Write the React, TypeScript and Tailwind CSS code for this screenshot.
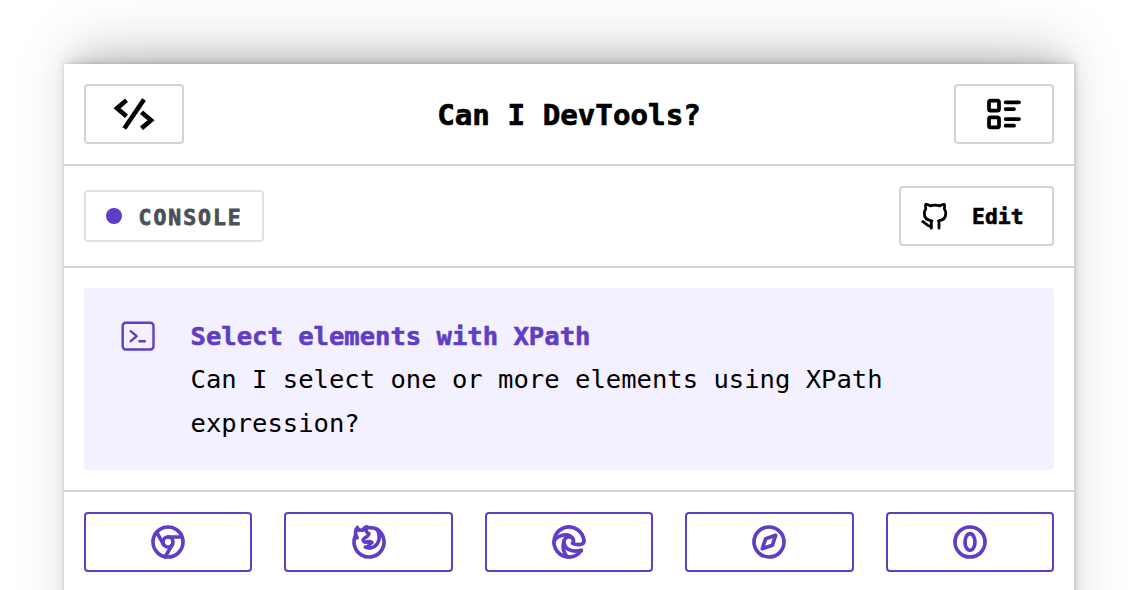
import { TbBrandChrome, TbBrandFirefox, TbBrandEdge, TbBrandSafari, TbBrandOpera, TbListDetails } from 'react-icons/tb';

const browsers = [
  { name: 'Chrome', Icon: TbBrandChrome },
  { name: 'Firefox', Icon: TbBrandFirefox },
  { name: 'Edge', Icon: TbBrandEdge },
  { name: 'Safari', Icon: TbBrandSafari },
  { name: 'Opera', Icon: TbBrandOpera },
];

function CodeIcon() {
  return (
    <svg width="42" height="32" viewBox="0 0 42 32" fill="none" stroke="currentColor" strokeWidth="4.6">
      <path d="M13.5 2.2L4 10.3L13.5 18.3" />
      <path d="M31 1.5L11.3 30.5" />
      <path d="M28.5 14.3L38 22.3L28.5 30.3" />
    </svg>
  );
}

function GithubIcon() {
  return (
    <svg className="mt-0.5" width="30" height="30" viewBox="0 0 30 30" fill="none" stroke="currentColor" strokeWidth="2.8" strokeLinecap="round" strokeLinejoin="round">
      <path d="M11.3 26.2V20.6c0-.8.2-1.3.6-1.8C7 18.4 4.3 15.8 4.3 11.3c0-1.9.5-3.3 1.5-4.5-.5-1.6-.5-3.1 0-4.5 0 0 2-.1 4.5 1.5 3.200-.8 6.300-.8 9.500 0 2.500-1.600 4.500-1.500 4.500-1.500.5 1.400.5 2.900 0 4.500 1 1.200 1.500 2.600 1.500 4.500 0 4.500-2.700 7.100-7.400 7.500.4.500.6 1 .6 1.800v5.600" />
      <path d="M11.3 24.3C7 24.7 6.3 21 2.7 19.6" />
    </svg>
  );
}

function TerminalIcon() {
  return (
    <svg className="mt-[7px] shrink-0" width="34" height="30" viewBox="0 0 34 30" fill="none" stroke="#5f3dc4" strokeWidth="2.4" strokeLinecap="round" strokeLinejoin="round">
      <rect x="1.7" y="1.7" width="30.8" height="26.8" rx="3.2" />
      <path d="M9.7 10.2L15.7 15.2L9.7 20.2M18.5 20.2H23.8" />
    </svg>
  );
}

export default function App() {
  return (
    <div className="h-[590px] w-[1140px] overflow-hidden bg-white px-16 pt-16 font-['DejaVu_Sans_Mono',monospace] text-black">
      <main className="-mr-px h-[800px] w-[1012px] border-r-2 border-[#ced4da] bg-white shadow-[0_-1px_3px_rgba(0,0,0,0.09),0_-4px_8px_-2px_rgba(0,0,0,0.07),0_-12px_20px_-6px_rgba(0,0,0,0.09),0_-22px_36px_-10px_rgba(0,0,0,0.08),0_-28px_64px_-12px_rgba(0,0,0,0.14)]">
        <header className="flex h-[102px] items-center justify-between border-b-2 border-[#ced4da] px-5">
          <button aria-label="Home" className="flex h-[60px] w-[100px] items-center justify-center rounded-[4px] border-2 border-[#ced4da]">
            <CodeIcon />
          </button>
          <h1 className="pt-1 text-[29.2px] font-bold leading-none [-webkit-text-stroke:0.7px_currentColor]">Can I DevTools?</h1>
          <button aria-label="Menu" className="flex h-[60px] w-[100px] items-center justify-center rounded-[4px] border-2 border-[#ced4da]">
            <TbListDetails size={40} className="[stroke-width:2.25]" />
          </button>
        </header>
        <div className="flex h-[102px] items-center justify-between border-b-2 border-[#ced4da] px-5">
          <div className="flex h-[52px] w-[180px] items-center rounded-[4px] border-2 border-[#dee2e6] pl-5">
            <span className="h-4 w-4 rounded-full bg-[#5f3dc4]" />
            <span className="ml-[16.500px] pt-[3px] text-[21.4px] font-bold leading-none tracking-[2px] text-[#495057] [-webkit-text-stroke:0.8px_currentColor]">CONSOLE</span>
          </div>
          <button className="flex h-[60px] w-[155px] items-center rounded-[4px] border-2 border-[#ced4da] pl-[19px]">
            <GithubIcon />
            <span className="ml-[22px] pt-0.5 text-[21.4px] font-bold leading-none [-webkit-text-stroke:0.6px_currentColor]">Edit</span>
          </button>
        </div>
        <section className="border-b-2 border-[#ced4da] p-5">
          <div className="flex h-[182px] rounded-[4px] bg-[#f3f0ff] pl-[37px] pt-[26px]">
            <TerminalIcon />
            <div className="ml-[35.5px] text-[25.55px] leading-[44px]">
              <h2 className="font-bold text-[#5f3dc4] [-webkit-text-stroke:0.6px_currentColor]">Select elements with XPath</h2>
              <p className="-mt-px w-[740px]">Can I select one or more elements using XPath expression?</p>
            </div>
          </div>
        </section>
        <nav className="grid grid-cols-5 gap-8 px-5 pt-5">
          {browsers.map(({ name, Icon }) => (
            <button key={name} aria-label={name} className="flex h-[60px] items-center justify-center rounded-[4px] border-2 border-[#5f3dc4] text-[#5f3dc4]">
              <Icon size={40} className="[stroke-width:2.2]" />
            </button>
          ))}
        </nav>
      </main>
    </div>
  );
}
